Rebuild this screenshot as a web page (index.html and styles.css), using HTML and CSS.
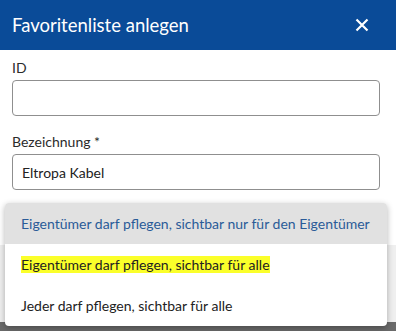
FILE: index.html
```html
<!DOCTYPE html>
<html lang="de">
<head>
    <meta charset="UTF-8">
    <meta name="viewport" content="width=device-width, initial-scale=1.0">
    <title>Favoritenliste anlegen</title>
    <link rel="stylesheet" href="styles.css">
</head>
<body>
    <div class="dialog">
        <div class="dialog-header">
            <h2>Favoritenliste anlegen</h2>
            <button class="close" aria-label="Schließen">
                <svg width="14" height="14" viewBox="0 0 14 14">
                    <path d="M1.5 1.5 L12.5 12.5 M12.5 1.5 L1.5 12.5" stroke="#fff" stroke-width="2.2" fill="none"/>
                </svg>
            </button>
        </div>

        <div class="dialog-body">
            <label class="field">
                <span class="field-label">ID</span>
                <input type="text" class="input">
            </label>

            <label class="field">
                <span class="field-label">Bezeichnung *</span>
                <input type="text" class="input" value="Eltropa Kabel">
            </label>

            <div class="field-rest"></div>
        </div>

        <div class="dialog-footer"></div>
        <div class="backdrop"></div>

        <ul class="menu">
            <li class="menu-item selected">Eigentümer darf pflegen, sichtbar nur für den Eigentümer</li>
            <li class="menu-item"><mark>Eigentümer darf pflegen, sichtbar für alle</mark></li>
            <li class="menu-item">Jeder darf pflegen, sichtbar für alle</li>
        </ul>
    </div>
</body>
</html>
```

FILE: styles.css
```css
body {
    margin: 0;
    font-family: Lato, "Liberation Sans", sans-serif;
    color: #333;
}

.dialog {
    position: relative;
    width: 396px;
    height: 331px;
    overflow: hidden;
    display: flex;
    flex-direction: column;
    background: #fff;
}

.dialog-header {
    height: 50px;
    flex: none;
    background: #0a4b98;
    display: flex;
    align-items: center;
    justify-content: space-between;
    padding: 0 27px 0 12px;
}

.dialog-header h2 {
    margin: 0;
    font-size: 18.5px;
    font-weight: 400;
    color: #fff;
}

.close {
    border: 0;
    background: none;
    padding: 0;
    display: flex;
}

.dialog-body {
    padding: 8px 16px 0 12px;
    height: 187px;
    flex: none;
}

.field {
    display: block;
    margin-bottom: 16px;
}

.field-label {
    display: block;
    font-size: 14px;
    line-height: 20px;
    margin-bottom: 2px;
    color: #2b2b2b;
}

.input {
    box-sizing: border-box;
    width: 100%;
    height: 36px;
    border: 1px solid #8f8f8f;
    border-radius: 4px;
    padding: 0 9px;
    font-family: inherit;
    font-size: 14px;
    color: #222;
}

.dialog-footer {
    height: 77px;
    flex: none;
    background: #efefef;
}

.backdrop {
    flex: 1;
    background: #6a6a6a;
}

.menu {
    position: absolute;
    top: 203px;
    left: 5px;
    width: 382px;
    margin: 0;
    padding: 0;
    list-style: none;
    background: #fff;
    border-radius: 4px;
    overflow: hidden;
    box-shadow: 0 2px 6px rgba(0, 0, 0, 0.3);
}

.menu-item {
    height: 41px;
    display: flex;
    align-items: center;
    padding: 0 16px;
    font-size: 14px;
    white-space: nowrap;
    color: #222;
}

.menu-item.selected {
    background: #e1e1e1;
    color: #2a5b98;
}

mark {
    background: #fbff2a;
    color: #222;
}
```
